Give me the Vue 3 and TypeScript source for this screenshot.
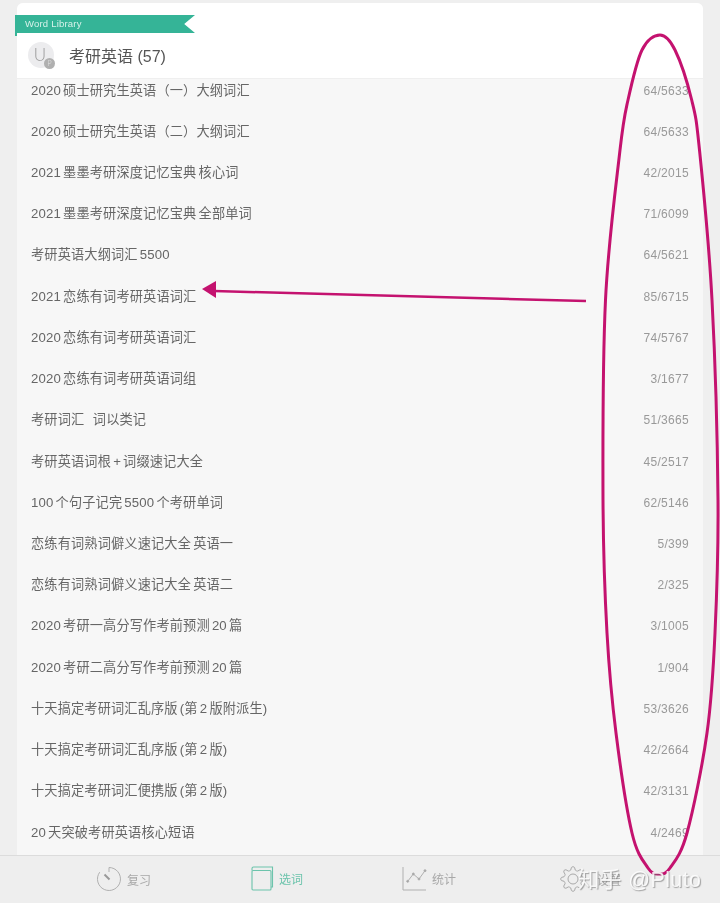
<script setup lang="ts">
const words: [string, string][] = [
  ['2020 硕士研究生英语（一）大纲词汇', '64/5633'],
  ['2020 硕士研究生英语（二）大纲词汇', '64/5633'],
  ['2021 墨墨考研深度记忆宝典 核心词', '42/2015'],
  ['2021 墨墨考研深度记忆宝典 全部单词', '71/6099'],
  ['考研英语大纲词汇 5500', '64/5621'],
  ['2021 恋练有词考研英语词汇', '85/6715'],
  ['2020 恋练有词考研英语词汇', '74/5767'],
  ['2020 恋练有词考研英语词组', '3/1677'],
  ['考研词汇    词以类记', '51/3665'],
  ['考研英语词根 + 词缀速记大全', '45/2517'],
  ['100 个句子记完 5500 个考研单词', '62/5146'],
  ['恋练有词熟词僻义速记大全 英语一', '5/399'],
  ['恋练有词熟词僻义速记大全 英语二', '2/325'],
  ['2020 考研一高分写作考前预测 20 篇', '3/1005'],
  ['2020 考研二高分写作考前预测 20 篇', '1/904'],
  ['十天搞定考研词汇乱序版 (第 2 版附派生)', '53/3626'],
  ['十天搞定考研词汇乱序版 (第 2 版)', '42/2664'],
  ['十天搞定考研词汇便携版 (第 2 版)', '42/3131'],
  ['20 天突破考研英语核心短语', '4/2469'],
]

// eight rounded teeth round the centre of a 26px box
const gearPath = (() => {
  const pt = (r: number, a: number) =>
    `${(13 + r * Math.cos(a)).toFixed(2)} ${(13 + r * Math.sin(a)).toFixed(2)}`
  const step = Math.PI / 4
  let d = `M${pt(9.2, -step * 0.32)}`
  for (let i = 0; i < 8; i++) {
    const a = i * step
    d += `Q${pt(12.6, a - step * 0.2)} ${pt(12.4, a)}Q${pt(12.6, a + step * 0.2)} ${pt(9.2, a + step * 0.32)}`
    d += `Q${pt(8.6, a + step / 2)} ${pt(9.2, a + step * 0.68)}`
  }
  return d + 'Z'
})()

// the hand-drawn loop round the counts, smoothed through points read off the shot
const loop: [number, number][] = [
  [660, 35], [675, 50], [691.7, 100], [699.5, 150], [712, 300], [718, 500], [715, 633],
  [707, 733], [687, 833], [670, 868], [659, 874], [648, 868], [632, 833], [616, 733],
  [607, 633], [603, 500], [605.5, 300], [620, 150], [628, 100], [642, 50],
]
const loopPath = (() => {
  const n = loop.length
  let d = `M${loop[0][0]} ${loop[0][1]}`
  for (let i = 0; i < n; i++) {
    const p0 = loop[(i + n - 1) % n]
    const p1 = loop[i]
    const p2 = loop[(i + 1) % n]
    const p3 = loop[(i + 2) % n]
    const c1x = p1[0] + (p2[0] - p0[0]) / 6
    const c1y = p1[1] + (p2[1] - p0[1]) / 6
    const c2x = p2[0] - (p3[0] - p1[0]) / 6
    const c2y = p2[1] - (p3[1] - p1[1]) / 6
    d += `C${c1x.toFixed(1)} ${c1y.toFixed(1)} ${c2x.toFixed(1)} ${c2y.toFixed(1)} ${p2[0]} ${p2[1]}`
  }
  return d + 'Z'
})()
</script>

<template>
  <div class="page">
    <div class="card">
      <header class="head">
        <div class="ribbon">Word Library</div>
        <div class="title-row">
          <div class="avatar">
            <span class="avatar-u">U</span>
            <span class="avatar-p">P</span>
          </div>
          <h1 class="title">考研英语 (57)</h1>
        </div>
      </header>
      <div class="list">
        <div class="list-inner">
          <div v-for="(w, i) in words" :key="i" class="row">
            <span class="name">{{ w[0] }}</span>
            <span class="count">{{ w[1] }}</span>
          </div>
        </div>
      </div>
    </div>

    <nav class="tabs">
      <div class="tab tab-review">
        <svg width="26" height="26" viewBox="0 0 26 26" fill="none" stroke="#b0b0b0" stroke-width="1">
          <path d="M13 1.500A11.500 11.500 0 1 1 3.700 6.200" />
          <path d="M13 1.500V6" />
          <path d="M8.500 8.500L13.500 13.500" stroke-width="2" stroke="#999" />
        </svg>
        <span>复习</span>
      </div>
      <div class="tab tab-pick active">
        <svg width="23" height="25" viewBox="0 0 23 25" fill="none" stroke="#6cc4ac" stroke-width="1.100">
          <path d="M1 4.500V2.500Q1 1 2.500 1H21.500V21H20" />
          <rect x="1" y="4.500" width="19" height="19.500" rx="1" />
        </svg>
        <span>选词</span>
      </div>
      <div class="tab tab-stat">
        <svg width="25" height="25" viewBox="0 0 25 25" fill="none" stroke="#b0b0b0" stroke-width="1">
          <path d="M1 1V24H24" />
          <path d="M5.700 15.300L11.300 8L17 13L23 4.700" />
          <circle cx="5.700" cy="15.300" r="1" fill="#a0a0a0" />
          <circle cx="11.300" cy="8" r="1" fill="#a0a0a0" />
          <circle cx="17" cy="13" r="1" fill="#a0a0a0" />
          <circle cx="23" cy="4.700" r="1" fill="#a0a0a0" />
        </svg>
        <span>统计</span>
      </div>
      <div class="tab tab-set">
        <svg width="26" height="26" viewBox="0 0 26 26" fill="none" stroke="#a9a9a9" stroke-width="1">
          <path :d="gearPath" />
          <circle cx="13" cy="13" r="5" />
        </svg>
        <span>设置</span>
      </div>
    </nav>

    <svg class="marks" width="720" height="903" viewBox="0 0 720 903" fill="none">
      <path :d="loopPath" stroke="#c4126f" stroke-width="3" />
      <path d="M586 301L214 291" stroke="#c4126f" stroke-width="2.500" />
      <path d="M202 289L216 281V298Z" fill="#c4126f" />
    </svg>
    <div class="watermark">知乎 @Pluto</div>
  </div>
</template>

<style>
html, body {
  margin: 0;
  background: #efefef;
}
</style>

<style scoped>
.page {
  position: relative;
  width: 720px;
  height: 903px;
  overflow: hidden;
  background: #efefef;
  font-family: "Liberation Sans", "Noto Sans CJK SC", sans-serif;
  display: flex;
  flex-direction: column;
  filter: blur(0.3px);
}

.card {
  height: 852px;
  margin: 3px 17px 0;
  border-radius: 6px 6px 0 0;
  background: #f7f7f7;
  display: flex;
  flex-direction: column;
}

.head {
  position: relative;
  height: 76px;
  flex: none;
  background: #fff;
  border-radius: 6px 6px 0 0;
  border-bottom: 1px solid #efefef;
  box-sizing: border-box;
}

.ribbon {
  position: absolute;
  left: -2px;
  top: 12px;
  width: 180px;
  height: 21px;
  padding: 0 0 3px 10px;
  box-sizing: border-box;
  background: #35b497;
  color: #d8f2ea;
  font-size: 9.500px;
  letter-spacing: 0.2px;
  line-height: 18px;
  clip-path: polygon(0 0, 100% 0, 94% 43%, 100% 86%, 2px 86%, 2px 100%, 0 100%);
}

.title-row {
  display: flex;
  align-items: center;
  height: 100%;
  padding: 28px 0 0 11px;
  box-sizing: border-box;
}

.avatar {
  position: relative;
  width: 26px;
  height: 26px;
  border-radius: 50%;
  background: #ececee;
  color: #999;
  font-family: Lato, sans-serif;
  font-size: 17px;
  font-weight: 300;
  line-height: 25px;
  text-align: center;
}

.avatar-u {
  position: relative;
  left: -1px;
}

.avatar-p {
  position: absolute;
  right: -1px;
  bottom: -1px;
  width: 11px;
  height: 11px;
  border-radius: 50%;
  background: #b0b0b0;
  color: #e8e8e8;
  font-size: 7px;
  line-height: 11px;
}

.title {
  margin: 0 0 0 15px;
  font-size: 16px;
  font-weight: 400;
  color: #555;
}

.list {
  flex: 1;
  overflow: hidden;
}

.list-inner {
  margin-top: -10px;
  padding: 0 14px;
}

.row {
  display: flex;
  align-items: center;
  justify-content: space-between;
  height: 41.220px;
  color: #666;
}

.name {
  padding-bottom: 1px;
  font-size: 13.200px;
  letter-spacing: 0.15px;
  word-spacing: -1.700px;
  white-space: pre;
}

.count {
  padding-top: 2px;
  font-size: 12px;
  letter-spacing: 0.3px;
  color: #999;
}

.tabs {
  flex: 1;
  position: relative;
  display: flex;
  border-top: 1px solid #dcdcdc;
  background: #eeeeee;
}

.tab {
  display: flex;
  align-items: center;
  gap: 5px;
  font-size: 12px;
  color: #a8a8a8;
  position: absolute;
  top: 10px;
}

.tab-review { left: 96px; }
.tab-pick { left: 251px; }
.tab-stat { left: 402px; }
.tab-set { left: 560px; gap: 11px; }
.active { color: #6cc4ac; }

.marks {
  position: absolute;
  inset: 0;
  pointer-events: none;
}

.watermark {
  position: absolute;
  left: 578px;
  top: 862px;
  font-size: 21.500px;
  letter-spacing: 0.4px;
  color: rgba(255, 255, 255, 0.85);
  text-shadow: 1px 1px 1px rgba(110, 110, 110, 0.6);
  white-space: nowrap;
}
</style>
